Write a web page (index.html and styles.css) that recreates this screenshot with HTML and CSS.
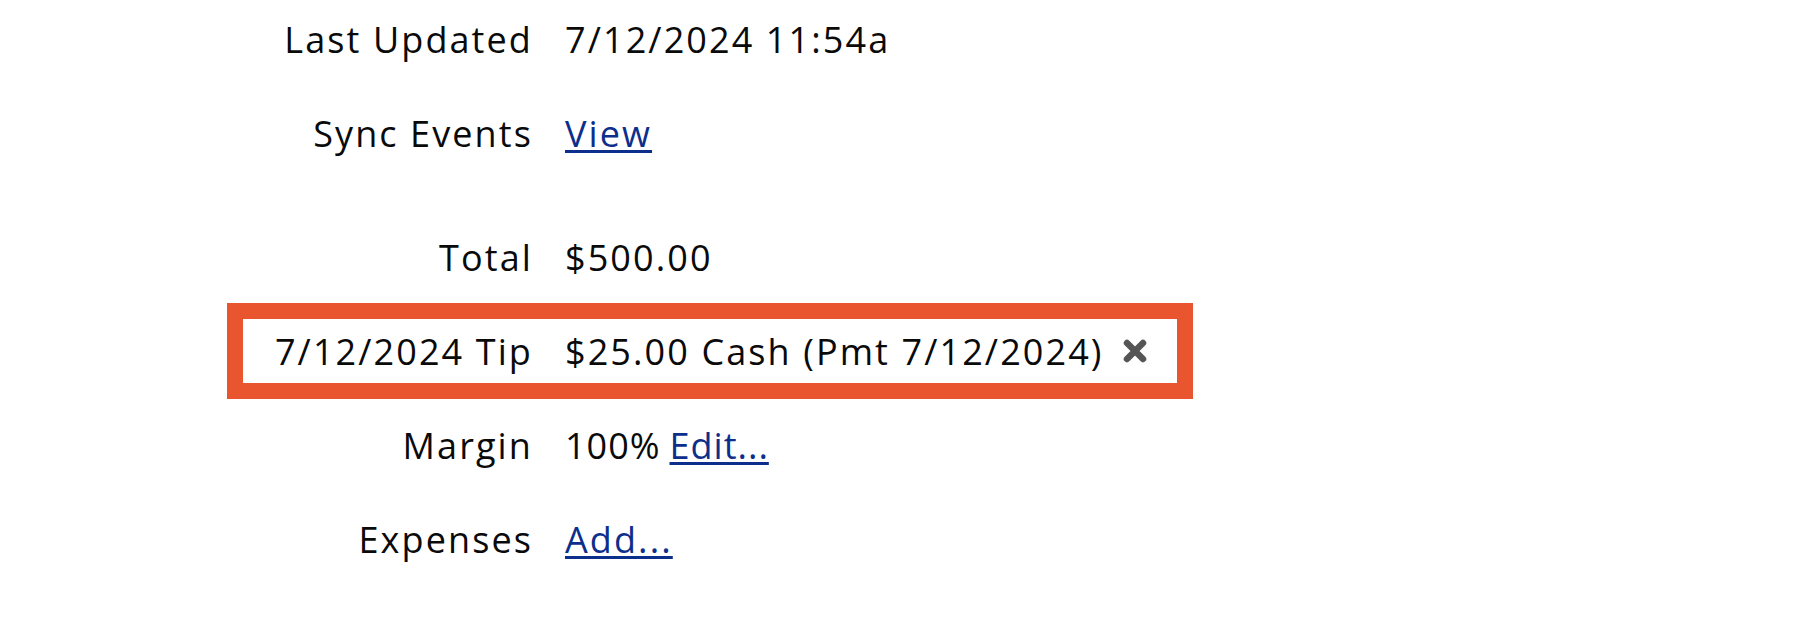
FILE: index.html
```html
<!DOCTYPE html>
<html>
<head>
<meta charset="utf-8">
<link rel="stylesheet" href="styles.css">
</head>
<body>
<div class="details">
  <div class="row">
    <div class="label">Last Updated</div>
    <div class="value">7/12/2024 11:54a</div>
  </div>
  <div class="row">
    <div class="label">Sync Events</div>
    <div class="value"><a href="#" class="link">View</a></div>
  </div>
  <div class="row section-start">
    <div class="label">Total</div>
    <div class="value">$500.00</div>
  </div>
  <div class="row highlight">
    <div class="label">7/12/2024 Tip</div>
    <div class="value">$25.00 Cash (Pmt 7/12/2024)
      <svg class="remove" viewBox="0 0 26 26" width="26" height="26" aria-hidden="true"><path d="M5 5 L21 21 M21 5 L5 21" stroke="#555" stroke-width="6.5" stroke-linecap="round" fill="none"/></svg>
    </div>
  </div>
  <div class="row">
    <div class="label">Margin</div>
    <div class="value tight">100% <a href="#" class="link">Edit...</a></div>
  </div>
  <div class="row">
    <div class="label">Expenses</div>
    <div class="value"><a href="#" class="link">Add...</a></div>
  </div>
</div>
</body>
</html>
```

FILE: styles.css
```css
html, body {
  margin: 0;
  padding: 0;
  background: #ffffff;
}

body {
  font-family: "Open Sans", "Liberation Sans", sans-serif;
  font-size: 36px;
  letter-spacing: 2.1px;
  color: #0a0a0a;
}

.details {
  display: flex;
  flex-direction: column;
  gap: 30px;
  padding-top: 7px;
  padding-left: 243px;
}

.row {
  display: flex;
  align-items: center;
  height: 64px;
  width: fit-content;
  padding-right: 29px;
}

.section-start {
  margin-top: 30px;
}

.label {
  width: 290px;
  text-align: right;
  white-space: nowrap;
}

.value {
  margin-left: 32px;
  white-space: nowrap;
  display: flex;
  align-items: center;
  gap: 0.3em;
}

.tight {
  letter-spacing: 1px;
  gap: 0.25em;
}

.link {
  color: #0d2f8c;
  text-decoration: underline;
  text-decoration-thickness: 3px;
  text-underline-offset: 3px;
}

.highlight {
  outline: 16px solid #e9552f;
}

.remove {
  margin-left: 8px;
  display: block;
}
```
